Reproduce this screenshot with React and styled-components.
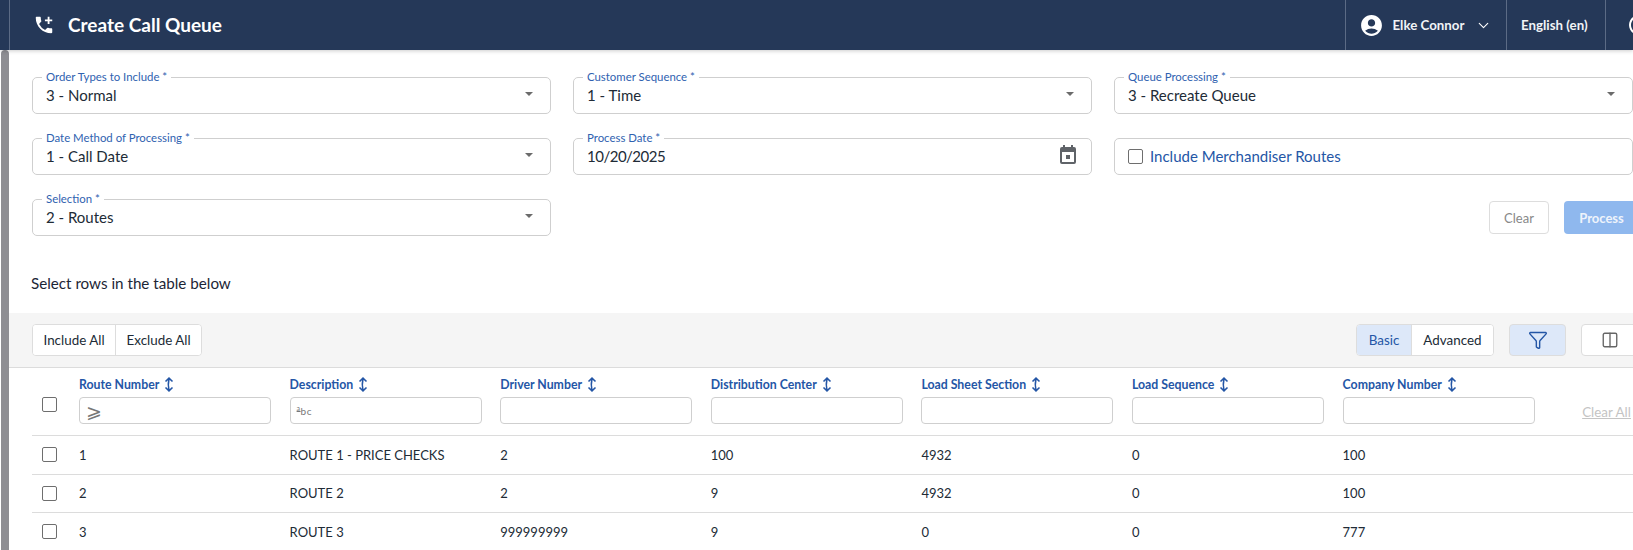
import React from "react"
import styled, { createGlobalStyle } from "styled-components"
import { MdAddIcCall, MdAccountCircle, MdHelpOutline } from "react-icons/md"
import { ChevronDown, Filter, Columns2 } from "lucide-react"

const GlobalStyle = createGlobalStyle`
html, body {
    margin: 0;
    height: 100%;
    overflow: hidden;
    background: #fff;
    font-family: Lato, "Noto Sans", sans-serif;
    color: #212b36;
}
* { box-sizing: border-box; }
svg { flex-shrink: 0; }
`

const columns = [
    "Route Number",
    "Description",
    "Driver Number",
    "Distribution Center",
    "Load Sheet Section",
    "Load Sequence",
    "Company Number",
]

const rows = [
    ["1", "ROUTE 1 - PRICE CHECKS", "2", "100", "4932", "0", "100"],
    ["2", "ROUTE 2", "2", "9", "4932", "0", "100"],
    ["3", "ROUTE 3", "999999999", "9", "0", "0", "777"],
]

const SortIcon = () => (
    <svg width="10" height="15" viewBox="0 0 10 15" fill="none" stroke="#2456a6" strokeWidth="1.6">
        <path d="M1.5 4.5 5 1.2l3.5 3.3M5 1.2c-.9 4-.9 8.6 0 12.6M1.5 10.5 5 13.8l3.5-3.3" />
    </svg>
)

const CalendarIcon = () => (
    <svg width="16" height="19" viewBox="0 0 16 19" fill="#5f6368">
        <path d="M3 0h2v2h6V0h2v2h1a2 2 0 0 1 2 2v13a2 2 0 0 1-2 2H2a2 2 0 0 1-2-2V4a2 2 0 0 1 2-2h1zM2 7v10h12V7z" />
        <rect x="6" y="10" width="4" height="4" />
    </svg>
)

const SelectField = ({ label, value }) => (
    <Field>
        <Legend>{label}</Legend>
        <Value>{value}</Value>
        <Caret />
    </Field>
)

const App = () => {
    return (
        <>
            <GlobalStyle />
            <Header>
                <TitleArea>
                    <MdAddIcCall size={22} color="#fff" />
                    <Title>Create Call Queue</Title>
                </TitleArea>
                <HeaderCell $width="161px" $pad="12.5px">
                    <MdAccountCircle size={25} color="#fff" />
                    <UserName>Elke Connor</UserName>
                    <ChevronDown size={17} color="#fff" strokeWidth={1.6} />
                </HeaderCell>
                <HeaderCell $width="99px" $pad="14px">
                    <UserName>English (en)</UserName>
                </HeaderCell>
                <HeaderCell $width="28px" $pad="21px">
                    <MdHelpOutline size={24} color="#fff" />
                </HeaderCell>
            </Header>
            <Page>
                <Rail />
                <Main>
                    <Form>
                        <SelectField label="Order Types to Include *" value="3 - Normal" />
                        <SelectField label="Customer Sequence *" value="1 - Time" />
                        <SelectField label="Queue Processing *" value="3 - Recreate Queue" />
                        <SelectField label="Date Method of Processing *" value="1 - Call Date" />
                        <Field>
                            <Legend>Process Date *</Legend>
                            <Value $tight>10/20/2025</Value>
                            <CalendarSlot>
                                <CalendarIcon />
                            </CalendarSlot>
                        </Field>
                        <Field>
                            <Legend $empty />
                            <CheckLabel>
                                <Box />
                                Include Merchandiser Routes
                            </CheckLabel>
                        </Field>
                        <SelectField label="Selection *" value="2 - Routes" />
                        <Actions>
                            <ClearButton>Clear</ClearButton>
                            <ProcessButton>Process</ProcessButton>
                        </Actions>
                    </Form>
                    <Caption>Select rows in the table below</Caption>
                    <Toolbar>
                        <ButtonGroup>
                            <ToolButton $compact>Include All</ToolButton>
                            <ToolButton $compact>Exclude All</ToolButton>
                        </ButtonGroup>
                        <ToolbarRight>
                            <ButtonGroup>
                                <ToolButton $active>Basic</ToolButton>
                                <ToolButton>Advanced</ToolButton>
                            </ButtonGroup>
                            <IconButton $active>
                                <Filter size={20} color="#2456a6" strokeWidth={1.7} />
                            </IconButton>
                            <IconButton>
                                <Columns2 size={18} color="#666" strokeWidth={1.8} />
                            </IconButton>
                        </ToolbarRight>
                    </Toolbar>
                    <TableHead>
                        <HeadCheckCell>
                            <Box />
                        </HeadCheckCell>
                        {columns.map((name, i) => (
                            <HeadCell key={name}>
                                <HeadTitle>
                                    {name}
                                    <SortIcon />
                                </HeadTitle>
                                <FilterInput>
                                    {i === 0 && <GreaterEqual>⩾</GreaterEqual>}
                                    {i === 1 && <TextHint><sup>a</sup>bc</TextHint>}
                                </FilterInput>
                            </HeadCell>
                        ))}
                        <ClearAll>Clear All</ClearAll>
                    </TableHead>
                    {rows.map((row) => (
                        <TableRow key={row[0]}>
                            <CheckCell>
                                <Box />
                            </CheckCell>
                            {row.map((cell, i) => (
                                <Cell key={i}>{cell}</Cell>
                            ))}
                        </TableRow>
                    ))}
                </Main>
            </Page>
        </>
    )
}

const Header = styled.header`
display: flex;
align-items: stretch;
height: 50px;
width: 1633px;
background: #253858;
position: relative;
z-index: 1;
box-shadow: 0 1px 4px rgba(0, 0, 0, 0.2);
`

const TitleArea = styled.div`
flex: 1;
display: flex;
align-items: center;
gap: 13px;
margin-left: 9px;
padding-left: 23px;
border-left: 1px solid #5c6b85;
`

const Title = styled.h1`
margin: -2px 0 0;
font-size: 19px;
font-weight: 700;
color: #fff;
`

const HeaderCell = styled.div`
display: flex;
align-items: center;
gap: 9px;
width: ${(p) => p.$width};
padding-left: ${(p) => p.$pad};
border-left: 1px solid #5c6b85;
overflow: hidden;
flex-shrink: 0;
`

const UserName = styled.span`
font-size: 13.3px;
font-weight: 700;
color: #f2f4f7;
white-space: nowrap;
margin-right: 2px;
`

const Page = styled.div`
display: flex;
height: 500px;
`

const Rail = styled.div`
width: 8px;
margin-left: 1px;
height: 100%;
background: #8e8e93;
border-radius: 4px 4px 0 0;
flex-shrink: 0;
`

const Main = styled.main`
width: 1624px;
flex-shrink: 0;
padding-top: 21px;
`

const Form = styled.div`
display: grid;
grid-template-columns: repeat(3, 519px);
column-gap: 22px;
row-gap: 18px;
margin-left: 23px;
`

const Field = styled.fieldset`
display: flex;
align-items: center;
height: 43px;
margin: 0;
padding: 0 12px 0 13px;
border: 1px solid #cfcfcf;
border-radius: 5px;
min-width: 0;
`

const Legend = styled.legend`
height: 12px;
margin-left: -4px;
padding: ${(p) => (p.$empty ? "0" : "0 4px")};
font-size: 11.4px;
line-height: 12px;
color: #2f62b0;
`

const Value = styled.div`
flex: 1;
font-size: 15px;
line-height: 20px;
margin-top: -6px;
color: #212b36;
letter-spacing: ${(p) => (p.$tight ? "-0.5px" : "0")};
`

const Caret = styled.span`
width: 0;
height: 0;
margin: -8px 5px 0 0;
border-left: 4.5px solid transparent;
border-right: 4.5px solid transparent;
border-top: 4.5px solid #6b6b6b;
`

const CalendarSlot = styled.span`
display: flex;
margin: -10px 3px 0 0;
`

const CheckLabel = styled.label`
display: flex;
align-items: center;
gap: 7px;
margin-top: -6px;
font-size: 15px;
color: #2456a6;
`

const Box = styled.span`
display: block;
width: 15px;
height: 15px;
border: 1px solid #6e6e6e;
border-radius: 2px;
background: #fff;
flex-shrink: 0;
`

const Actions = styled.div`
grid-column: 2 / 4;
display: flex;
justify-content: flex-end;
align-items: flex-start;
gap: 15px;
margin-right: -6px;
height: 43px;
padding-top: 8px;
`

const ClearButton = styled.button`
width: 60px;
height: 33px;
font: inherit;
font-size: 13px;
color: #888;
background: #fff;
border: 1px solid #ddd;
border-radius: 4px;
`

const ProcessButton = styled.button`
width: 75px;
height: 33px;
font: inherit;
font-size: 13px;
font-weight: 700;
color: #eef3fb;
background: #8fb8ee;
border: none;
border-radius: 4px;
`

const Caption = styled.p`
margin: 37px 0 20px 22px;
font-size: 15.2px;
line-height: 20px;
color: #1c2536;
`

const Toolbar = styled.div`
display: flex;
align-items: center;
justify-content: space-between;
height: 55px;
padding: 0 0 0 23px;
background: #f5f5f5;
border-bottom: 1px solid #dcdcdc;
width: 1624px;
`

const ToolbarRight = styled.div`
display: flex;
gap: 15px;
margin-right: -5px;
`

const ButtonGroup = styled.div`
display: flex;
height: 32px;
background: #fff;
border: 1px solid #ddd;
border-radius: 4px;
overflow: hidden;
`

const ToolButton = styled.button`
height: 100%;
padding: 0 ${(p) => (p.$compact ? "10.5px" : "11.5px")};
font: inherit;
font-size: 13.4px;
color: ${(p) => (p.$active ? "#2456a6" : "#212b36")};
background: ${(p) => (p.$active ? "#dde8f9" : "#fff")};
border: none;
& + & {
    border-left: 1px solid #ddd;
}
`

const IconButton = styled.button`
display: flex;
align-items: center;
justify-content: center;
width: 57px;
height: 32px;
background: ${(p) => (p.$active ? "#dde8f9" : "#fff")};
border: 1px solid #ddd;
border-radius: 4px;
`

const rowGrid = `
display: grid;
grid-template-columns: 47px repeat(7, 210.6px) 1fr;
margin-left: 23px;
border-bottom: 1px solid #dcdcdc;
`

const TableHead = styled.div`
${rowGrid}
height: 68px;
`

const TableRow = styled.div`
${rowGrid}
height: 38.5px;
align-items: center;
`

const CheckCell = styled.div`
display: flex;
align-items: center;
padding: 0 0 0 10px;
`

const HeadCheckCell = styled(CheckCell)`
padding-top: 5px;
`

const HeadCell = styled.div`
display: flex;
flex-direction: column;
padding-top: 8px;
`

const HeadTitle = styled.div`
display: flex;
align-items: center;
gap: 5px;
height: 16px;
font-size: 12.3px;
font-weight: 700;
color: #2456a6;
`

const FilterInput = styled.div`
display: flex;
align-items: center;
width: 192px;
height: 27px;
margin-top: 5px;
padding-left: 6px;
background: #fff;
border: 1px solid #cfcfcf;
border-radius: 4px;
`

const GreaterEqual = styled.span`
font-size: 19px;
line-height: 20px;
color: #777;
`

const TextHint = styled.span`
font-size: 10px;
color: #777;
letter-spacing: 0.5px;
sup {
    font-size: 7px;
    text-decoration: underline;
    line-height: 0;
}
`

const ClearAll = styled.div`
align-self: center;
margin: 20px 0 0 29px;
font-size: 13.4px;
color: #c4c4c4;
text-decoration: underline;
white-space: nowrap;
`

const Cell = styled.div`
font-size: 13px;
color: #212b36;
`

export default App
